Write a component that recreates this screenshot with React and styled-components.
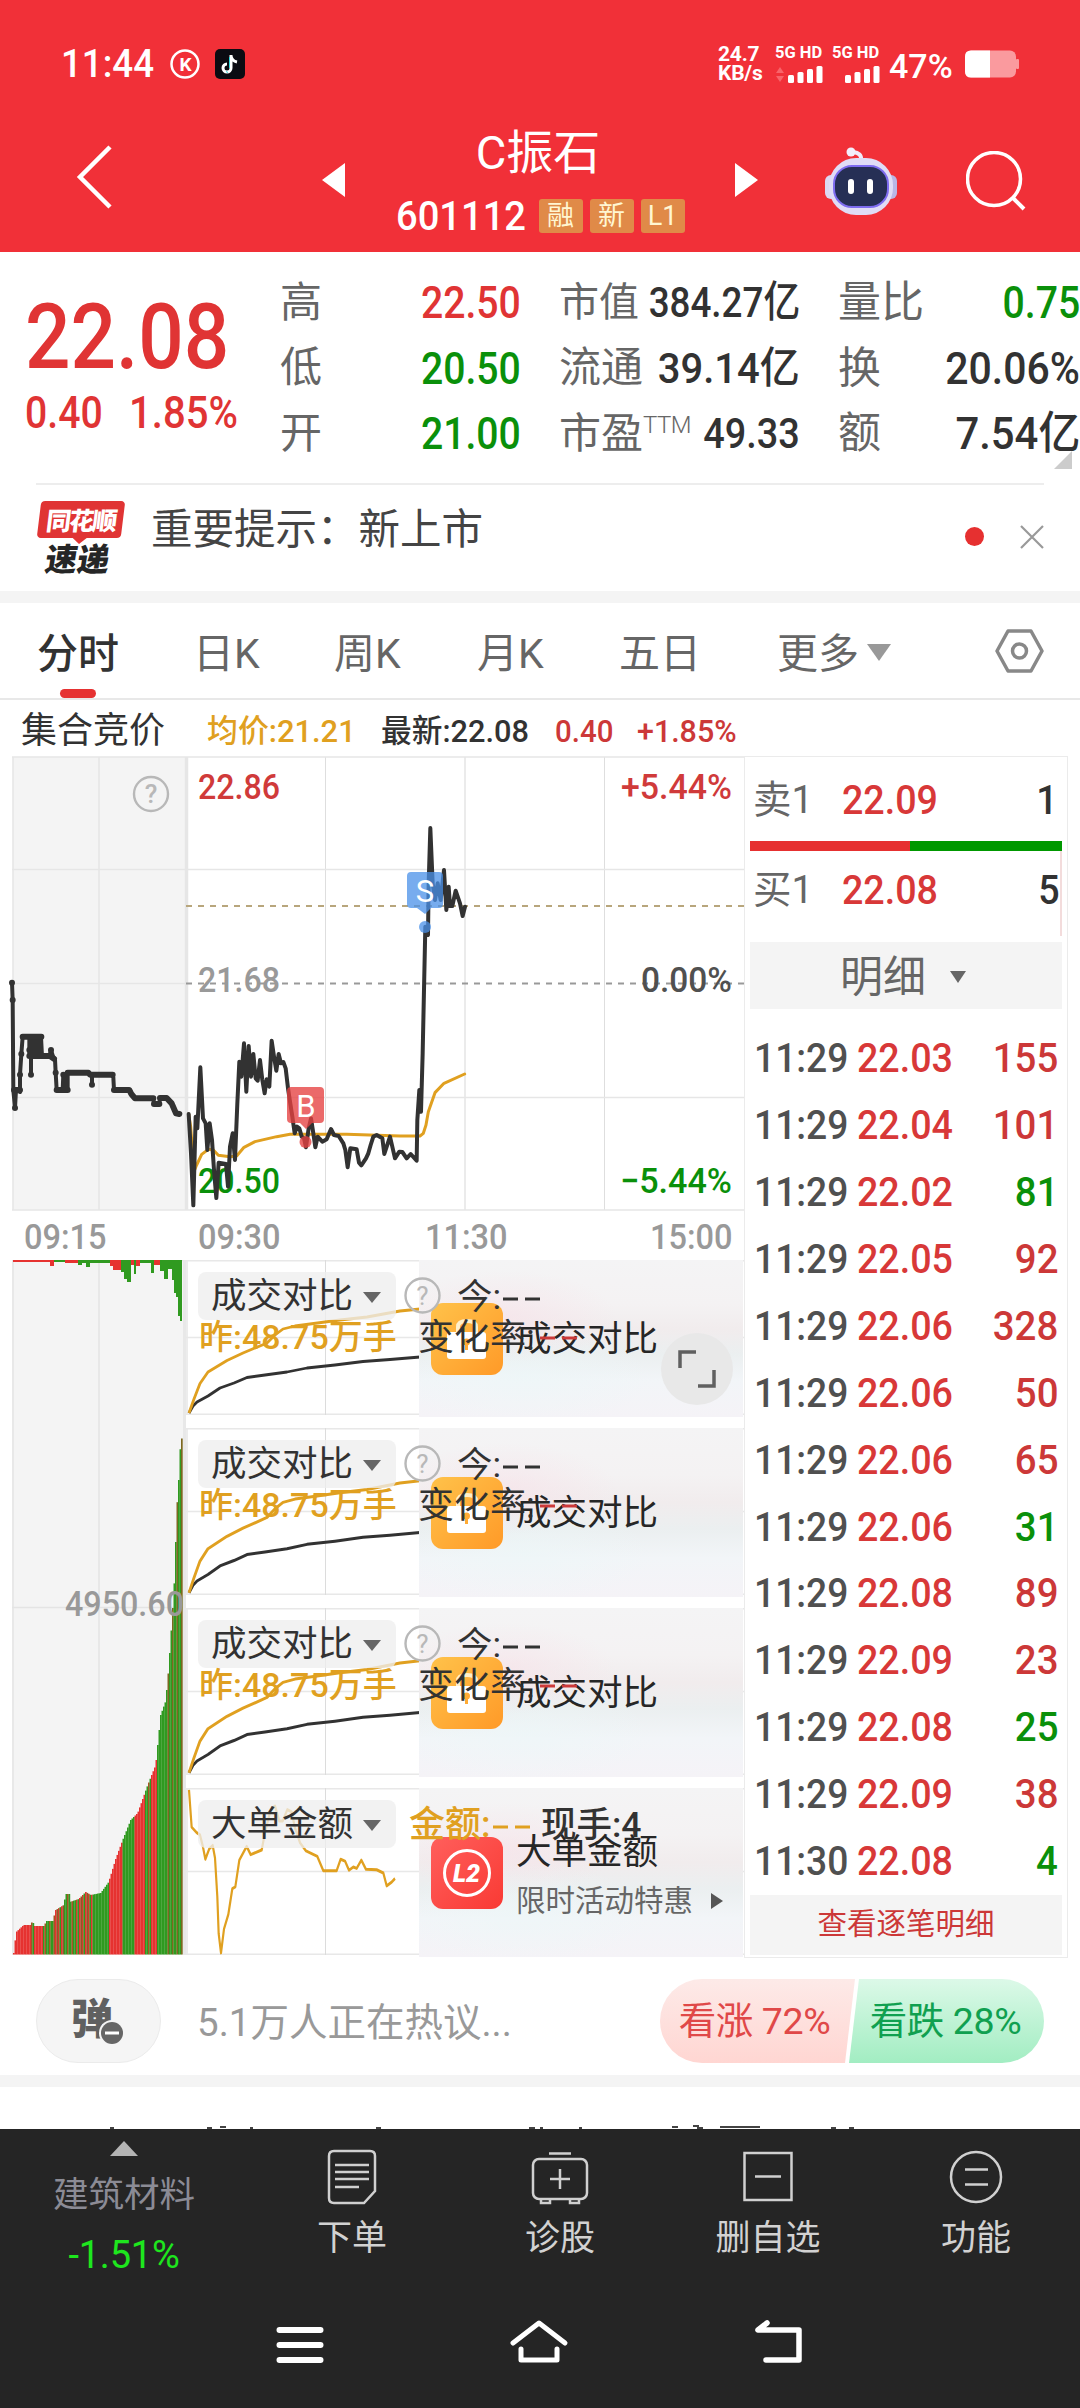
import React from "react";
import styled, { createGlobalStyle } from "styled-components";

const GlobalStyle = createGlobalStyle`
  * {
    box-sizing: border-box;
  }
  body {
    margin: 0;
    background: #fff;
    font-family: Roboto, "Noto Sans CJK SC", sans-serif;
    color: #323232;
  }
`;

const RED = "#e03434";
const GREEN = "#0a900a";
const GOLD = "#e0a020";

const Page = styled.div`
  width: 1080px;
  height: 2408px;
  display: flex;
  flex-direction: column;
  overflow: hidden;
  background: #fff;
  line-height: 1;
  white-space: nowrap;
`;

// Narrowed figures, close to a DIN cut
const Num = styled.span`
  display: inline-block;
  justify-self: ${(p) => (p.$origin === "right" ? "end" : "start")};
  margin-left: ${(p) => (p.$origin === "right" ? -40 : 0)}px;
  font-weight: ${(p) => p.$weight || 500};
  font-size: ${(p) => p.$size || 45}px;
  color: ${(p) => p.$color || "inherit"};
  transform: scaleX(${(p) => p.$sx || 0.87});
  transform-origin: ${(p) => p.$origin || "left"} center;
`;

/* ---------- header ---------- */

const Header = styled.header`
  height: 252px;
  background: #f13038;
  color: #fff;
  display: flex;
  flex-direction: column;
`;

const StatusBar = styled.div`
  height: 112px;
  padding: 16px 61px 0 61px;
  display: flex;
  justify-content: space-between;
  align-items: center;
`;

const StatusGroup = styled.div`
  display: flex;
  align-items: center;
`;

const Clock = styled.div`
  width: 108px;
`;

const NetSpeed = styled.div`
  width: 57px;
  font-size: 21px;
  font-weight: 700;
  line-height: 19px;
  letter-spacing: -0.2px;
`;

const Signal = styled.div`
  width: 57px;
  display: flex;
  flex-direction: column;
  gap: 4px;
  font-size: 16.5px;
  font-weight: 700;
`;

const Percent = styled.div`
  width: 76px;
  padding: 4px 0 0 0;
  font-size: 34px;
  font-weight: 500;
`;

const NavBar = styled.div`
  height: 140px;
  display: grid;
  grid-template-columns: 322px 23px 390px 23px 67px 72px 69px 59px;
  align-items: center;

  svg {
    display: block;
  }
`;

const BackSlot = styled.div`
  padding: 0 0 10px 76px;
`;

const ArrowSlot = styled.div`
  padding-bottom: 4px;
`;

const TitleBlock = styled.div`
  height: 140px;
  padding-top: 15px;
  display: flex;
  flex-direction: column;
  align-items: center;
`;

const StockName = styled.div`
  font-size: 47px;
  line-height: 52px;
  margin-left: -4px;
`;

const CodeRow = styled.div`
  margin-top: 17px;
  width: 289px;
  height: 40px;
  display: flex;
  align-items: center;
  gap: 7px;
`;

const CodeText = styled.div`
  width: 136px;
`;

const Badge = styled.span`
  width: 44px;
  height: 34px;
  border-radius: 3px;
  background: #e08a48;
  color: #fff6d2;
  font-size: 27px;
  display: flex;
  align-items: center;
  justify-content: center;
`;

/* ---------- quote ---------- */

const Quote = styled.section`
  height: 231px;
  display: grid;
  grid-template-columns: 280px 241px 38px 241px 38px 242px;
  position: relative;
`;

const PriceCol = styled.div`
  padding: 41px 0 0 25px;
  color: ${RED};
`;

const ChangeRow = styled.div`
  margin-top: 7px;
  display: grid;
  grid-template-columns: 104px 1fr;
`;

const QuoteCol = styled.div`
  grid-column: ${(p) => p.$col};
  padding-top: 18px;
`;

const QuoteRow = styled.div`
  height: 65.5px;
  display: flex;
  justify-content: space-between;
  align-items: center;
`;

const Label = styled.span`
  font-size: ${(p) => p.$size || 42}px;
  color: #666;
  display: flex;

  sup {
    font-size: 24px;
    line-height: 24px;
    font-weight: 300;
    letter-spacing: -0.5px;
  }
`;

const Corner = styled.div`
  position: absolute;
  right: 8px;
  bottom: 14px;
  border-left: 18px solid transparent;
  border-bottom: 18px solid #ccc;
`;

const Notice = styled.section`
  height: 108px;
  margin: 0 36px;
  border-top: 2px solid #ededed;
  display: flex;
`;

const NoticeLogo = styled.div`
  width: 115px;
  padding-top: 16px;
  font-weight: 900;
  font-family: "Noto Sans CJK SC", sans-serif;
`;

const LogoTag = styled.div`
  position: relative;
  width: 84px;
  height: 37px;
  margin-left: 3px;
  border-radius: 4px;
  background: ${RED};
  color: #fff;
  font-size: 25px;
  letter-spacing: -2px;
  transform: skewX(-7deg);
  display: flex;
  align-items: center;
  justify-content: center;

  &::after {
    content: "";
    position: absolute;
    left: 36px;
    top: 37px;
    border-left: 7px solid transparent;
    border-right: 7px solid transparent;
    border-top: 6px solid ${RED};
  }
`;

const LogoSub = styled.div`
  margin: 5px 0 0 10px;
  font-size: 32px;
  line-height: 29px;
  letter-spacing: 0;
  color: #262626;
  transform: skewX(-9deg);
`;

const NoticeText = styled.div`
  flex: 1;
  padding-top: 24px;
  font-size: 41.5px;
  color: #444;
`;

const NoticeEnd = styled.div`
  padding-top: 40px;
  display: flex;
  gap: 36px;

  svg {
    display: block;
  }
`;

const Dot = styled.span`
  width: 19px;
  height: 19px;
  border-radius: 50%;
  background: #e63030;
  margin-top: 2px;
`;

const Band = styled.div`
  height: 12px;
  background: #f4f4f4;
`;

/* ---------- tabs ---------- */

const Tabs = styled.nav`
  height: 97px;
  border-bottom: 2px solid #e8e8e8;
  display: grid;
  grid-template-columns: 193px 141px 143px 142px 158px 218px 60px;
  color: #666;
  font-size: 41px;
`;

const Tab = styled.div`
  padding: 31px 0 0 ${(p) => (p.$active ? 37 : 0)}px;
  color: ${(p) => (p.$active ? "#323232" : "#666")};
  font-weight: ${(p) => (p.$active ? 500 : 400)};
  display: flex;
  flex-direction: column;

  &::after {
    content: "";
    display: ${(p) => (p.$active ? "block" : "none")};
    width: 36px;
    height: 9px;
    margin: 14px 0 0 23px;
    border-radius: 5px;
    background: #e63232;
  }
`;

const MoreTab = styled.div`
  padding-top: 31px;
  display: flex;
  gap: 8px;
`;

const Caret = styled.span`
  width: 0;
  height: 0;
  margin-top: ${(p) => p.$top || 0}px;
  border-left: ${(p) => p.$w}px solid transparent;
  border-right: ${(p) => p.$w}px solid transparent;
  border-top: ${(p) => p.$h}px solid ${(p) => p.$color || "#666"};
`;

const InfoRow = styled.div`
  height: 56px;
  display: grid;
  grid-template-columns: 207px 174px 174px 82px 1fr;
  align-items: center;
  padding-top: 5px;
  font-size: 32px;
`;

const InfoName = styled.span`
  padding-left: 21px;
  font-size: 36px;
`;

/* ---------- chart area ---------- */

const Market = styled.main`
  height: 1199px;
  display: grid;
  grid-template-columns: 744px 324px;
`;

const Charts = styled.div`
  display: flex;
  flex-direction: column;

  svg {
    display: block;
  }
`;

const TimeAxis = styled.div`
  height: 49px;
  padding-top: 3px;
  display: grid;
  grid-template-columns: 24px 174px 227px 225px 1fr;
  align-items: center;
  color: #999;
`;

const Lower = styled.div`
  height: 695px;
  display: grid;
  grid-template-columns: 186px 558px;
`;

const SubList = styled.div`
  display: flex;
  flex-direction: column;
  justify-content: space-between;
`;

const Sub = styled.div`
  position: relative;
  height: ${(p) => p.$h}px;
`;

const Promo = styled.div`
  position: absolute;
  left: 233px;
  top: 0;
  width: 324px;
  height: calc(100% + 2px);
  background: radial-gradient(ellipse 110px 46px at 27% 36%, rgba(247, 225, 232, 0.6), transparent),
    radial-gradient(ellipse 130px 50px at 32% 74%, rgba(236, 247, 248, 0.6), transparent),
    linear-gradient(#f4f4f5 0%, #f4f2f3 28%, #f1eced 44%, #ebeff0 60%, #f2f5f8 77%, #f5f3f7 100%);
`;

const PromoIcon = styled.div`
  position: absolute;
  left: 12px;
  top: ${(p) => p.$top}px;
`;

const PromoText = styled.div`
  position: absolute;
  left: ${(p) => p.$left || 97}px;
  top: ${(p) => p.$top}px;
  font-size: ${(p) => p.$size || 35.5}px;
  line-height: 36px;
  color: ${(p) => p.$color || "#262626"};
  display: flex;
  align-items: center;
  gap: 17px;
`;

const Pill = styled.div`
  position: absolute;
  left: 12px;
  top: 12px;
  width: 198px;
  height: 48px;
  padding: 2px 0 0 13px;
  border-radius: 8px;
  background: rgba(238, 238, 238, 0.78);
  display: flex;
  align-items: center;
  gap: 10px;
  font-size: 35.5px;
`;

const Over = styled.div`
  position: absolute;
  left: ${(p) => p.$x}px;
  top: ${(p) => p.$y}px;
  font-size: ${(p) => p.$size || 35}px;
  font-weight: ${(p) => p.$weight || 400};
  line-height: 40px;
  color: ${(p) => p.$color || "#323232"};
`;

const Expand = styled.div`
  position: absolute;
  left: 475px;
  top: 73px;
  width: 72px;
  height: 72px;
  border-radius: 50%;
  background: #e8e8e8;
  display: flex;
  align-items: center;
  justify-content: center;
`;

/* ---------- order book ---------- */

const Book = styled.aside`
  border: 1px solid #ebebeb;
  padding: 0 5px;
  display: flex;
  flex-direction: column;
`;

const BookRow = styled.div`
  height: ${(p) => p.$h}px;
  display: grid;
  grid-template-columns: 92px 1fr auto;
  align-items: center;
  padding: ${(p) => (p.$edge ? "0 0 6px" : "3px 4px 0 0")};
  border-right: ${(p) => (p.$edge ? "2px solid #f3dcdc" : "none")};
`;

const BookLabel = styled.span`
  padding-left: 3px;
  font-size: 38.5px;
  color: #666;
`;

const Ratio = styled.div`
  height: 10px;
  display: flex;
  background: #009800;

  &::before {
    content: "";
    width: 160px;
    background: #e63030;
  }
`;

const DetailHead = styled.div`
  height: 67px;
  margin: 6px 0 16px;
  background: #f4f4f4;
  display: flex;
  justify-content: center;
  align-items: center;
  gap: 24px;
  padding: 3px 6px 0 0;
  font-size: 43px;
  color: #666;
`;

const Trade = styled.div`
  height: 66.95px;
  padding: 1px 4px 0 4px;
  display: grid;
  grid-template-columns: 103px 1fr auto;
  align-items: center;
`;

const DetailLink = styled.div`
  margin-top: auto;
  margin-bottom: 2px;
  height: 60px;
  background: #f4f4f4;
  color: #cc3838;
  font-size: 29.5px;
  display: flex;
  align-items: center;
  justify-content: center;
`;

/* ---------- discussion ---------- */

const Discuss = styled.section`
  height: 120px;
  padding: 24px 36px 0;
  display: flex;
`;

const Bullet = styled.div`
  position: relative;
  width: 125px;
  height: 84px;
  border-radius: 42px;
  border: 1px solid #ebebeb;
  background: #f5f5f5;
  padding: 15px 0 0 34px;
  font: 900 42px/42px "Noto Sans CJK SC", sans-serif;
  color: #606060;

  svg {
    position: absolute;
    left: 61px;
    top: 39px;
  }
`;

const Hot = styled.div`
  flex: 1;
  padding: 25px 0 0 36px;
  font-size: 38.5px;
  color: #999;
`;

const Vote = styled.div`
  width: ${(p) => (p.$up ? 195 : 199)}px;
  height: 84px;
  margin-left: ${(p) => (p.$up ? 0 : -10)}px;
  padding: ${(p) => (p.$up ? "2px 6px 0 0" : "2px 0 0 2px")};
  display: flex;
  align-items: center;
  justify-content: center;
  font-size: 37.5px;
  letter-spacing: -0.4px;
  color: ${(p) => (p.$up ? "#e04848" : "#10a050")};
  background: ${(p) =>
    p.$up ? "linear-gradient(#fdeae8, #ffd6d2)" : "linear-gradient(#dcf9e8, #a2edc2)"};
  border-radius: ${(p) => (p.$up ? "42px 0 0 42px" : "0 42px 42px 0")};
  clip-path: ${(p) =>
    p.$up
      ? "polygon(0 0, 100% 0, calc(100% - 10px) 100%, 0 100%)"
      : "polygon(14px 0, 100% 0, 100% 100%, 4px 100%)"};
`;

const NextBlock = styled.div`
  height: 42px;
  display: flex;
  align-items: flex-end;
`;

/* ---------- bottom ---------- */

const Bottom = styled.footer`
  flex: 1;
  background: #252525;
  display: flex;
  flex-direction: column;
`;

const Actions = styled.div`
  height: 158px;
  display: grid;
  grid-template-columns: 248px 208px 208px 208px 208px;
`;

const Sector = styled.div`
  padding-top: 12px;
  display: flex;
  flex-direction: column;
  align-items: center;
  color: #8b8b95;
  font-size: 35.5px;
`;

const SectorArrow = styled.span`
  border-left: 14px solid transparent;
  border-right: 14px solid transparent;
  border-bottom: 15px solid #b4b4b4;
  margin-bottom: 22px;
`;

const SectorChange = styled.span`
  margin-top: 22px;
  font-size: 38px;
  letter-spacing: -0.2px;
  color: #1ee61e;
`;

const Action = styled.div`
  padding-top: 20px;
  display: flex;
  flex-direction: column;
  align-items: center;
  gap: 16px;
  color: #d2d2d2;
  font-size: 35px;
`;

const SystemNav = styled.div`
  flex: 1;
  padding: 30px 276px 0;
  display: flex;
  justify-content: space-between;
`;

/* ---------- data ---------- */

const trades = [
  ["11:29", "22.03", 155, true],
  ["11:29", "22.04", 101, true],
  ["11:29", "22.02", 81, false],
  ["11:29", "22.05", 92, true],
  ["11:29", "22.06", 328, true],
  ["11:29", "22.06", 50, true],
  ["11:29", "22.06", 65, true],
  ["11:29", "22.06", 31, false],
  ["11:29", "22.08", 89, true],
  ["11:29", "22.09", 23, true],
  ["11:29", "22.08", 25, false],
  ["11:29", "22.09", 38, true],
  ["11:30", "22.08", 4, false],
];

const quoteLeft = [
  ["高", "22.50", RED],
  ["低", "20.50", GREEN],
  ["开", "21.00", GREEN],
];

// [label, value, narrowing, label size]
const quoteMid = [
  ["市值", "384.27亿", 0.855, 40],
  ["流通", "39.14亿", 0.93, 42],
  ["市盈", "49.33", 0.88, 42],
];

const quoteRight = [
  ["量比", "0.75", GREEN, 0.87],
  ["换", "20.06%", "#323232", 0.91],
  ["额", "7.54亿", "#323232", 0.93],
];

// Line data is kept at three units per pixel
const auctionLine =
  "36,728 38,780 40,1050 45,1104 48,1050 60,1056 60,1004 64,942 68,890 88,890 88,948 93,948 93,1004 93,890 98,948 103,890 108,948 112,890 117,948 123,890 124,910 126,948 148,948 153,930 160,952 165,958 167,998 170,1050 188,1050 190,1004 197,1050 203,1050 203,998 265,998 270,1004 276,1004 276,1034 276,1004 335,1004 340,1012 342,1050 390,1050 392,1062 405,1075 460,1075 462,1092 478,1092 480,1074 500,1074 515,1090 528,1120 540,1122";

// Runs of quotes so close together that their dots merge
const auctionRuns =
  "M42 1050H60M68 890H124M88 948H124M88 930H120M126 948H150L162 956M170 1050H203M203 998H265L270 1004H338M342 1050H388L394 1062L405 1075H460M462 1092H478M480 1074H500L515 1090L528 1120L538 1122";

const priceLine =
  "566,1122 573,1240 580,1396 587,1130 592,1165 601,982 609,1135 617,1150 622,1230 629,1150 636,1200 642,1290 649,1374 656,1268 678,1272 684,1340 690,1220 698,1180 705,1260 712,1090 718,965 724,1010 732,910 739,1055 746,918 753,1010 760,942 767,1015 773,1022 780,960 787,1020 794,1060 800,1018 808,1040 815,902 822,950 829,992 836,942 843,970 850,966 857,985 864,1045 870,1085 877,1130 884,1180 891,1160 898,1165 905,1190 912,1195 918,1222 926,1165 933,1135 940,1180 946,1222 953,1190 967,1205 980,1198 993,1167 1002,1185 1016,1188 1030,1210 1036,1230 1043,1282 1051,1225 1070,1228 1077,1268 1084,1276 1098,1255 1105,1240 1112,1215 1120,1190 1130,1185 1147,1195 1153,1242 1170,1190 1185,1255 1198,1235 1207,1236 1220,1255 1232,1242 1250,1262 1252,1140 1258,1050 1263,1115 1268,940 1276,560 1284,585 1286,430 1291,264 1298,430 1305,480 1313,430 1322,480 1332,390 1339,510 1346,440 1350,498 1357,498 1367,452 1380,490 1388,528 1395,500";

const averageLine =
  "566,1122 572,1160 578,1240 583,1292 590,1275 605,1243 625,1228 640,1230 655,1246 690,1250 710,1248 732,1222 765,1205 830,1190 870,1183 1040,1183 1200,1188 1260,1188 1270,1180 1278,1155 1285,1115 1305,1058 1332,1030 1394,1002";

const bigOrderLine =
  "567,1197 575,1278 590,1290 600,1295 608,1318 616,1348 628,1325 638,1318 645,1345 652,1430 656,1510 663,1552 672,1500 685,1468 697,1412 706,1408 718,1350 740,1320 752,1338 785,1328 795,1290 812,1240 825,1232 838,1265 848,1265 862,1240 875,1245 885,1280 900,1312 918,1330 952,1342 970,1373 1010,1373 1022,1348 1035,1352 1047,1372 1060,1365 1070,1368 1084,1350 1098,1370 1130,1371 1150,1378 1160,1406 1175,1398 1185,1390";

// [x, top] of the matched volume silhouette
const volumeShape = [
  [13, 693], [15.5, 672], [23, 665], [30, 665], [32, 660], [33, 666], [43, 666], [46, 661],
  [52, 661], [55, 650], [63, 645], [65, 634], [68.5, 634], [69, 642], [78, 639], [85, 632],
  [90, 635], [100, 633], [108, 622], [115, 599], [122, 580], [130, 560], [137, 553],
  [147, 525], [155, 505], [160, 455], [165, 441], [168, 408], [172, 348], [174.5, 307],
  [175.5, 257], [178, 220], [180, 179], [182, 178],
];

const volumeColors = [
  [31, "r"], [33, "m"], [43, "r"], [54, "m"], [64, "x"], [76, "m"], [92, "x"], [109, "g"],
  [122, "r"], [134, "g"], [145, "r"], [151, "m"], [156, "r"], [164, "g"], [182, "h"],
];

const restShape = [
  [50, 2, "r"], [54, 6, "r"], [65, 2, "g"], [78, 3, "r"], [82, 5, "g"], [86, 3, "g"],
  [90, 7, "g"], [110, 3, "g"], [113, 6, "r"], [121, 10, "r"], [124, 12, "g"], [127, 19, "g"],
  [131, 22, "g"], [134, 5, "r"], [136, 14, "g"], [140, 6, "r"], [151, 3, "g"], [154, 13, "g"],
  [160, 5, "r"], [164, 11, "g"], [168, 19, "g"], [172, 9, "g"], [174, 20, "g"], [176, 33, "g"],
  [178, 37, "g"], [180, 56, "g"], [182, 61, "g"],
];

function shapeAt(x) {
  const i = Math.max(1, volumeShape.findIndex((p) => p[0] >= x));
  const [x0, y0] = volumeShape[i - 1];
  const [x1, y1] = volumeShape[i];
  return y0 + ((y1 - y0) * (x - x0)) / (x1 - x0);
}

function barColor(x, i) {
  const kind = volumeColors.find((c) => x < c[0])?.[1] || "g";
  if (kind === "r") return "#e63230";
  if (kind === "m") return i % 3 === 0 ? "#a45424" : "#309a20";
  if (kind === "x") return ["#e63230", "#8c5a28", "#d03c2c", "#309a20"][i % 4];
  if (kind === "h") return i % 3 === 1 ? "#7c6820" : "#309a20";
  return "#309a20";
}

/* ---------- drawings ---------- */

const Help = ({ x, y }) => (
  <g>
    <circle cx={x} cy={y} r="17" fill="none" stroke="#b8b8b8" strokeWidth="2.4" />
    <text x={x} y={y + 9} textAnchor="middle" fontSize="26" fill="#b8b8b8">
      ?
    </text>
  </g>
);

const Bars = ({ arrows }) => (
  <svg width="48" height="17">
    {arrows && <path d="M1 7L5 1L9 7ZM1 10L5 16L9 10Z" fill="#f8646a" />}
    {[0, 1, 2, 3].map((i) => (
      <rect key={i} x={13 + i * 9.5} y={9 - i * 3} width="6" height={8 + i * 3} rx="1.5" fill="#fff" />
    ))}
  </svg>
);

const Robot = () => (
  <svg width="72" height="72" viewBox="0 0 72 72">
    <path d="M36 14Q37 7 28 6" fill="none" stroke="#f1eafa" strokeWidth="4" />
    <circle cx="26" cy="6" r="4.500" fill="#f4eefb" />
    <rect x="0" y="29" width="12" height="24" rx="6" fill="#dcd8f2" />
    <rect x="60" y="29" width="12" height="24" rx="6" fill="#b9b6e6" />
    <rect x="4" y="12" width="64" height="57" rx="27" fill="#e0dcf6" />
    <rect x="9" y="20" width="54" height="41" rx="18" fill="#262f55" stroke="#7e6cf0" strokeWidth="2" />
    <rect x="23" y="33" width="6" height="15" rx="3" fill="#fff" />
    <rect x="42" y="33" width="6" height="15" rx="3" fill="#fff" />
  </svg>
);

function PriceChart() {
  return (
    <svg width="744" height="455" viewBox="0 756 744 455" fontFamily="Roboto" fontWeight="500">
      <rect x="13" y="757" width="173" height="453" fill="#f4f4f4" />
      <g stroke="#e6e6e6" strokeWidth="1.6" fill="none">
        <path d="M13 757V1210M99 757V1210M465 757V1210" />
        <path d="M325.5 757V1210M604.5 757V1210" stroke="#dedede" strokeWidth="1" />
        <path d="M12 757H744M12 1210H744M12 869.5H744M12 1097.5H744M12 983.5H186" />
        <path d="M186.500 757V1210" strokeWidth="3.5" />
      </g>
      <path d="M186 906H744" stroke="#b8a67c" strokeWidth="2" strokeDasharray="6 6" />
      <path d="M186 983.500H744" stroke="#999" strokeWidth="1.800" strokeDasharray="6 6" />
      <Help x={151} y={794} />
      <text x="198" y="799" fontSize="35.500" fill="#d03a3a" textLength="82" lengthAdjust="spacingAndGlyphs">22.86</text>
      <text x="198" y="992" fontSize="35.500" fill="#999" textLength="82" lengthAdjust="spacingAndGlyphs">21.68</text>
      <text x="198" y="1193" fontSize="35.500" fill={GREEN} textLength="82" lengthAdjust="spacingAndGlyphs">20.50</text>
      <g transform="translate(0 740) scale(0.33333)" fill="none" strokeLinejoin="round" strokeLinecap="round">
        <polyline points={auctionLine} stroke="#323232" strokeWidth="12" />
        <path d={auctionRuns} stroke="#323232" strokeWidth="18" />
        <g fill="#323232">
          {[[36, 728], [38, 780], [45, 1104], [60, 1004], [64, 942], [93, 1004], [153, 930], [167, 998], [276, 1034], [190, 1004]].map(
            ([x, y]) => (
              <circle key={`${x}-${y}`} cx={x} cy={y} r="9" />
            )
          )}
        </g>
        <polyline points={averageLine} stroke={GOLD} strokeWidth="9" />
        <polyline points={priceLine} stroke="#323232" strokeWidth="12" />
      </g>
      <g fill="#e64040" fillOpacity=".78">
        <path d="M291 1087h29a4 4 0 0 1 4 4v28a4 4 0 0 1-4 4h-8l-6 6-6-6h-9a4 4 0 0 1-4-4v-28a4 4 0 0 1 4-4z" />
        <circle cx="305.500" cy="1142" r="6" />
      </g>
      <g fill="#4a90e8" fillOpacity=".75">
        <path d="M411 872h28a4 4 0 0 1 4 4v28a4 4 0 0 1-4 4h-8l-6 6-8-6h-6a4 4 0 0 1-4-4v-28a4 4 0 0 1 4-4z" />
        <circle cx="425" cy="927" r="6" />
      </g>
      <g fill="#fff" fontSize="31" fontWeight="400" textAnchor="middle">
        <text x="306" y="1117">B</text>
        <text x="425" y="902">S</text>
      </g>
      <text x="621" y="799" fontSize="35.500" fill="#d03a3a" textLength="111" lengthAdjust="spacingAndGlyphs">+5.44%</text>
      <text x="641" y="992" fontSize="35.500" fill="#505050" textLength="91" lengthAdjust="spacingAndGlyphs">0.00%</text>
      <text x="620" y="1193" fontSize="35.500" fill={GREEN} textLength="112" lengthAdjust="spacingAndGlyphs">−5.44%</text>
    </svg>
  );
}

function AuctionVolume() {
  const xs = Array.from({ length: 113 }, (_, i) => 13 + i * 1.5);
  return (
    <svg width="186" height="695">
      <rect x="12" width="174" height="695" fill="#f4f4f4" />
      <path d="M13 0V695M99 0V695M12 347.500H186M12 .5H186" stroke="#e4e4e4" strokeWidth="1.500" />
      <path d="M184.500 0V695" stroke="#e8e8e8" strokeWidth="3" />
      {xs.map((x, i) => {
        const top = shapeAt(x);
        return <rect key={x} x={x} y={top} width="1.7" height={694.5 - top} fill={barColor(x, i)} />;
      })}
      {restShape.map(([end, depth, color], i) => {
        const start = i ? restShape[i - 1][0] : 13;
        return (
          <rect
            key={end}
            x={start}
            width={end - start}
            height={depth}
            fill={color === "r" ? "#e63230" : "#309a20"}
          />
        );
      })}
      <text x="65" y="356" fontFamily="Roboto" fontWeight="500" fontSize="34.500" fill="#999" textLength="119" lengthAdjust="spacingAndGlyphs">
        4950.60
      </text>
    </svg>
  );
}

const SubGrid = ({ h, children }) => (
  <svg width="558" height={h} viewBox={`186 0 558 ${h}`}>
    <path
      d={`M186 .7H744M186 ${h - 0.8}H744M186 ${h / 2}H744M187 0V${h}`}
      stroke="#e8e8e8"
      strokeWidth="1.600"
    />
    <path d={`M325.500 0V${h}`} stroke="#dcdcdc" />
    {children}
  </svg>
);

const LockIcon = () => (
  <svg width="72" height="72">
    <defs>
      <linearGradient id="lockFill" x1="0" y1="0" x2="1" y2="1">
        <stop offset="0" stopColor="#ffc24a" />
        <stop offset="1" stopColor="#ff9a28" />
      </linearGradient>
    </defs>
    <rect width="72" height="72" rx="12" fill="url(#lockFill)" />
    <path d="M27 31v-7q0-6 9-6t9 6v7" fill="none" stroke="#fff0cc" strokeWidth="4" />
    <rect x="16" y="29" width="39" height="27" rx="3" fill="#fff" />
    <circle cx="35.500" cy="39" r="3.500" fill="#ffab35" />
    <rect x="34" y="39" width="3" height="8" fill="#ffab35" />
  </svg>
);

const LevelIcon = () => (
  <svg width="72" height="72">
    <defs>
      <linearGradient id="levelFill" x1="0" y1="0" x2="1" y2="1">
        <stop offset="0" stopColor="#ff5f5c" />
        <stop offset="1" stopColor="#f93a34" />
      </linearGradient>
    </defs>
    <rect width="72" height="72" rx="12" fill="url(#levelFill)" />
    <circle cx="36" cy="36" r="22.500" fill="none" stroke="#fff" strokeWidth="3" />
    <text x="35.500" y="45" fontFamily="Roboto" fontWeight="900" fontStyle="italic" fontSize="25" fill="#fff" textAnchor="middle">
      L2
    </text>
  </svg>
);

const DashSvg = styled.svg`
  && {
    display: inline-block;
  }
`;

const Dashes = ({ color = "#323232" }) => (
  <DashSvg width="40" height="24">
    <path d="M2 14H17M24 14H39" stroke={color} strokeWidth="3" />
  </DashSvg>
);

function ComparePanel({ h, offset, expand }) {
  return (
    <Sub $h={h}>
      <SubGrid h={h}>
        <g
          transform={`scale(1 ${h / 155})`}
          fill="none"
          strokeWidth="2.800"
          strokeLinejoin="round"
        >
          <polyline
            points="189,153 193,146 197,142 208,136 220,128 234,123 247,117.5 265,115 287,112 307,108 335,105 363,101.5 390,99.500 420,97"
            stroke="#323232"
          />
          <polyline
            points="189,153 194,139 200,123.500 208,112 227,100.500 243,93 267,83 275,75 283,69 295,66 310,64 340,60 367,57 400,51 420,49"
            stroke={GOLD}
          />
        </g>
      </SubGrid>
      <Promo>
        <PromoIcon $top={offset}>
          <LockIcon />
        </PromoIcon>
        <PromoText $top={offset + 18}>成交对比</PromoText>
      </Promo>
      <Pill>
        成交对比
        <Caret $w={9} $h={11} />
      </Pill>
      <Over $x={13} $y={57} $size={34} $weight={500} $color={GOLD}>
        昨:48.75万手
      </Over>
      <Over $x={218} $y={17}>
        <svg width="37" height="37">
          <Help x={18.5} y={18.5} />
        </svg>
      </Over>
      <Over $x={271} $y={17} $size={35.5}>
        今:<Dashes />
      </Over>
      <Over $x={232} $y={58} $size={36}>
        变化率:
      </Over>
      <Over $x={352} $y={57}>
        <Dashes color="#cc3a3a" />
      </Over>
      {expand && (
        <Expand>
          <svg width="38" height="38" fill="none" stroke="#606060" strokeWidth="3.500">
            <path d="M2 18V2H18M20 36H36V20" />
          </svg>
        </Expand>
      )}
    </Sub>
  );
}

function BigOrderPanel() {
  return (
    <Sub $h={167}>
      <SubGrid h={167}>
        <g transform="translate(0 -547.700) scale(.33333 .45914)">
          <polyline points={bigOrderLine} fill="none" stroke={GOLD} strokeWidth="6.500" strokeLinejoin="round" />
        </g>
      </SubGrid>
      <Promo>
        <PromoIcon $top={49}>
          <LevelIcon />
        </PromoIcon>
        <PromoText $top={46}>大单金额</PromoText>
        <PromoText $top={95} $size={29.5} $color="#666">
          限时活动特惠
          <svg width="13" height="18">
            <path d="M1 1L13 9L1 17Z" fill="#555" />
          </svg>
        </PromoText>
      </Promo>
      <Pill>
        大单金额
        <Caret $w={9} $h={11} />
      </Pill>
      <Over $x={223} $y={17} $size={36} $weight={500} $color={GOLD}>
        金额:<Dashes color={GOLD} />
      </Over>
      <Over $x={355} $y={17} $size={35.5} $weight={500}>
        现手:4
      </Over>
    </Sub>
  );
}

const DocIcon = () => (
  <svg width="50" height="56" fill="none" stroke="#d0d0d0" strokeWidth="2.500">
    <path d="M7 2H43Q48 2 48 7V42L37 54H7Q2 54 2 49V7Q2 2 7 2Z" />
    <path d="M8 16H42M8 23H42M8 30H42M8 38H32" />
  </svg>
);

const KitIcon = () => (
  <svg width="58" height="56" fill="none" stroke="#d0d0d0" strokeWidth="2.500">
    <path d="M18 4.500H40M10 50v4h9v-4M39 50v4h9v-4" />
    <rect x="2" y="10" width="54" height="40" rx="6" />
    <path d="M29 20V40M19 30H39" />
  </svg>
);

const RemoveIcon = () => (
  <svg width="50" height="56" fill="none" stroke="#d0d0d0" strokeWidth="2.500">
    <rect x="1.500" y="4" width="47" height="47" />
    <path d="M12 27.500H38" />
  </svg>
);

const MenuIcon = () => (
  <svg width="54" height="56" fill="none" stroke="#d0d0d0" strokeWidth="2.500">
    <circle cx="27" cy="28" r="25" />
    <path d="M16 20.500H39M16 35.500H39" />
  </svg>
);

const actions = [
  ["下单", DocIcon],
  ["诊股", KitIcon],
  ["删自选", RemoveIcon],
  ["功能", MenuIcon],
];

export default function App() {
  return (
    <Page>
      <GlobalStyle />
      <Header>
        <StatusBar>
          <StatusGroup>
            <Clock>
              <Num $size={39} $sx={0.94}>
                11:44
              </Num>
            </Clock>
            <svg width="76" height="32">
              <circle cx="16" cy="16" r="13.500" fill="none" stroke="#fff" strokeWidth="2.500" />
              <text x="16.500" y="23" fontSize="19" fontWeight="700" fill="#fff" textAnchor="middle">
                K
              </text>
              <rect x="46" y="1" width="30" height="30" rx="5" fill="#0b0b12" />
              <path d="M62 7v13a4 4 0 1 1-4-4M62 8q1 5 6 6" fill="none" stroke="#fff" strokeWidth="3" />
              <path d="M60.500 9v11M57 23.500l2 1" stroke="#35d8dc" />
            </svg>
          </StatusGroup>
          <StatusGroup>
            <NetSpeed>
              24.7
              <br />
              KB/s
            </NetSpeed>
            <Signal>
              5G HD
              <Bars arrows />
            </Signal>
            <Signal>
              5G HD
              <Bars />
            </Signal>
            <Percent>47%</Percent>
            <svg width="54" height="28">
              <rect width="51" height="27" rx="6" y="0.500" fill="#fa9a9e" />
              <rect x="51" y="9" width="3" height="10" rx="1" fill="#fa9a9e" />
              <path d="M6 .5H25V27.500H6Q0 27.500 0 21.500V6.500Q0 .5 6 .5Z" fill="#fff" />
            </svg>
          </StatusGroup>
        </StatusBar>
        <NavBar>
          <BackSlot>
            <svg width="38" height="66">
              <path d="M34 3L4 33L34 63" fill="none" stroke="#fff" strokeWidth="4.500" />
            </svg>
          </BackSlot>
          <ArrowSlot>
            <svg width="23" height="36">
              <path d="M23 1V35L0 18Z" fill="#fff" />
            </svg>
          </ArrowSlot>
          <TitleBlock>
            <StockName>C振石</StockName>
            <CodeRow>
              <CodeText>
                <Num $size={41} $sx={0.93}>
                  601112
                </Num>
              </CodeText>
              <Badge>融</Badge>
              <Badge>新</Badge>
              <Badge>L1</Badge>
            </CodeRow>
          </TitleBlock>
          <ArrowSlot>
            <svg width="23" height="36">
              <path d="M0 1V35L23 18Z" fill="#fff" />
            </svg>
          </ArrowSlot>
          <span />
          <Robot />
          <span />
          <svg width="62" height="62">
            <circle cx="28" cy="28" r="26.500" fill="none" stroke="#fff" strokeWidth="3.500" />
            <path d="M47 47L58 58" stroke="#fff" strokeWidth="4" />
          </svg>
        </NavBar>
      </Header>

      <Quote>
        <PriceCol>
          <Num $size={90} $sx={0.89}>
            22.08
          </Num>
          <ChangeRow>
            <Num>0.40</Num>
            <Num $sx={0.89}>1.85%</Num>
          </ChangeRow>
        </PriceCol>
        <QuoteCol $col={2}>
          {quoteLeft.map(([label, value, color]) => (
            <QuoteRow key={label}>
              <Label>{label}</Label>
              <Num $color={color} $origin="right">
                {value}
              </Num>
            </QuoteRow>
          ))}
        </QuoteCol>
        <QuoteCol $col={4}>
          {quoteMid.map(([label, value, sx, size]) => (
            <QuoteRow key={label}>
              <Label $size={size}>
                {label}
                {label === "市盈" && <sup>TTM</sup>}
              </Label>
              <Num $size={43} $sx={sx} $origin="right">
                {value}
              </Num>
            </QuoteRow>
          ))}
        </QuoteCol>
        <QuoteCol $col={6}>
          {quoteRight.map(([label, value, color, sx]) => (
            <QuoteRow key={label}>
              <Label $size={43}>{label}</Label>
              <Num $color={color} $sx={sx} $origin="right">
                {value}
              </Num>
            </QuoteRow>
          ))}
        </QuoteCol>
        <Corner />
      </Quote>

      <Notice>
        <NoticeLogo>
          <LogoTag>同花顺</LogoTag>
          <LogoSub>速递</LogoSub>
        </NoticeLogo>
        <NoticeText>重要提示：新上市</NoticeText>
        <NoticeEnd>
          <Dot />
          <svg width="24" height="24">
            <path d="M1 1L23 23M23 1L1 23" stroke="#999" strokeWidth="2.200" />
          </svg>
        </NoticeEnd>
      </Notice>
      <Band />

      <Tabs>
        <Tab $active>分时</Tab>
        <Tab>日K</Tab>
        <Tab>周K</Tab>
        <Tab>月K</Tab>
        <Tab>五日</Tab>
        <MoreTab>
          更多
          <Caret $w={12} $h={17} $top={10} $color="#999" />
        </MoreTab>
        <svg width="50" height="97">
          <path
            d="M13 28H36L47 48L36 68H13L2 48Z"
            fill="none"
            stroke="#888"
            strokeWidth="3.500"
            strokeLinejoin="round"
          />
          <circle cx="24.500" cy="48" r="7" fill="none" stroke="#888" strokeWidth="3.500" />
        </svg>
      </Tabs>

      <InfoRow>
        <InfoName>集合竞价</InfoName>
        <Num $size={32} $color={GOLD} $sx={0.965}>
          均价:21.21
        </Num>
        <Num $size={32} $sx={0.96}>
          最新:22.08
        </Num>
        <Num $size={32} $color="#cc3838" $sx={0.92}>
          0.40
        </Num>
        <Num $size={32} $color="#cc3838" $sx={0.95}>
          +1.85%
        </Num>
      </InfoRow>

      <Market>
        <Charts>
          <PriceChart />
          <TimeAxis>
            <span />
            {["09:15", "09:30", "11:30", "15:00"].map((t) => (
              <Num key={t} $size={35} $sx={0.93}>
                {t}
              </Num>
            ))}
          </TimeAxis>
          <Lower>
            <AuctionVolume />
            <SubList>
              <ComparePanel h={155} offset={43} expand />
              <ComparePanel h={167} offset={49} />
              <ComparePanel h={167} offset={49} />
              <BigOrderPanel />
            </SubList>
          </Lower>
        </Charts>

        <Book>
          <BookRow $h={84}>
            <BookLabel>卖1</BookLabel>
            <Num $size={40} $color="#d83838" $sx={0.94}>
              22.09
            </Num>
            <Num $size={40} $sx={0.94} $origin="right">
              1
            </Num>
          </BookRow>
          <Ratio />
          <BookRow $h={85} $edge>
            <BookLabel>买1</BookLabel>
            <Num $size={40} $color="#d83838" $sx={0.94}>
              22.08
            </Num>
            <Num $size={40} $sx={0.94} $origin="right">
              5
            </Num>
          </BookRow>
          <DetailHead>
            明细
            <Caret $w={8.5} $h={12} />
          </DetailHead>
          {trades.map(([time, price, volume, up], i) => (
            <Trade key={i}>
              <Num $size={40} $color="#505050" $sx={0.93}>
                {time}
              </Num>
              <Num $size={40} $color="#d83838" $sx={0.94}>
                {price}
              </Num>
              <Num $size={40} $color={up ? "#cc3838" : GREEN} $sx={0.96} $origin="right">
                {volume}
              </Num>
            </Trade>
          ))}
          <DetailLink>查看逐笔明细</DetailLink>
        </Book>
      </Market>

      <Discuss>
        <Bullet>
          弹
          <svg width="28" height="28">
            <circle cx="14" cy="14" r="13" fill="#f5f5f5" />
            <circle cx="14" cy="14" r="11" fill="#666" />
            <path d="M7 14H21" stroke="#fff" strokeWidth="3" />
          </svg>
        </Bullet>
        <Hot>5.1万人正在热议...</Hot>
        <Vote $up>看涨 72%</Vote>
        <Vote>看跌 28%</Vote>
      </Discuss>
      <Band />
      <NextBlock>
        <svg width="1080" height="5">
          <path
            d="M110 4h4M207 4h5M220 3h6M250 4h3M376 4h5M529 4h6M540 4h3M579 4h3M672 3h6M693 2h6M697 4h6M720 3h40M831 4h5M849 4h5"
            stroke="#444"
            strokeWidth="2"
          />
        </svg>
      </NextBlock>

      <Bottom>
        <Actions>
          <Sector>
            <SectorArrow />
            建筑材料
            <SectorChange>-1.51%</SectorChange>
          </Sector>
          {actions.map(([label, Icon]) => (
            <Action key={label}>
              <Icon />
              {label}
            </Action>
          ))}
        </Actions>
        <SystemNav>
          <svg width="48" height="52">
            <path d="M3.500 13H44.500M3.500 28H44.500M3.500 43H44.500" stroke="#fff" strokeWidth="6" strokeLinecap="round" />
          </svg>
          <svg width="60" height="52" fill="none" stroke="#fff" strokeWidth="5" strokeLinecap="round" strokeLinejoin="round">
            <path d="M4 26L30 6L56 26M12 32V43H48V32" />
          </svg>
          <svg width="50" height="52" fill="none" stroke="#fff" strokeWidth="5.500" strokeLinejoin="round" strokeLinecap="round">
            <path d="M13 6L4 13H45V43H12" />
          </svg>
        </SystemNav>
      </Bottom>
    </Page>
  );
}
